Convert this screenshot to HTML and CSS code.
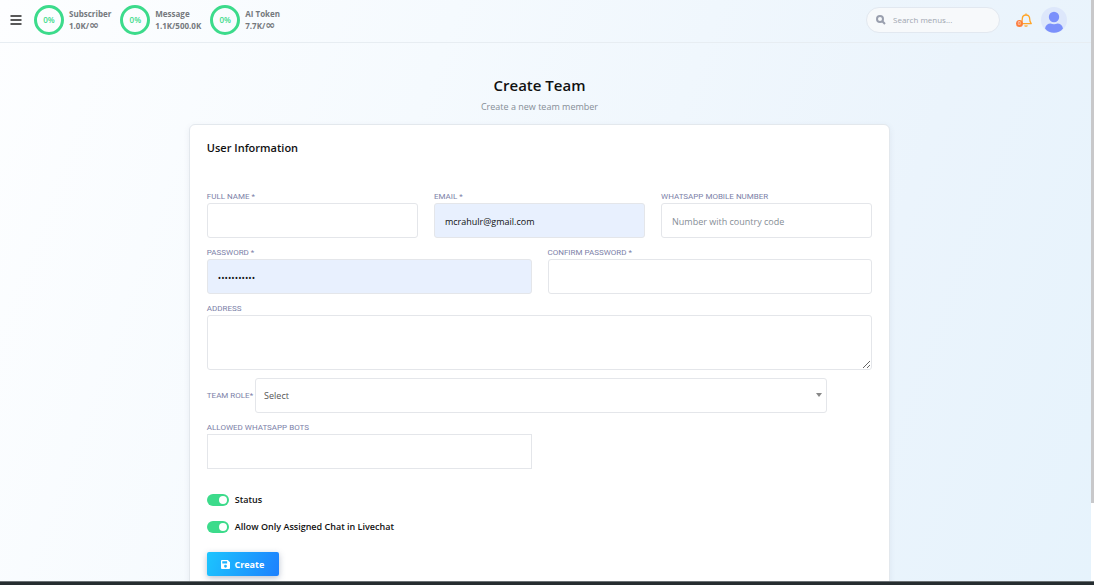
FILE: index.html
```html
<!DOCTYPE html>
<html lang="en">
<head>
    <meta charset="UTF-8">
    <meta name="viewport" content="width=device-width, initial-scale=1.0">
    <title>Create Team</title>
    <link rel="stylesheet" href="styles.css">
</head>
<body>
    <header class="topbar">
        <button class="menu-toggle" type="button" aria-label="Toggle menu">
            <svg viewBox="0 0 12 10" width="12" height="10">
                <path d="M0.5 1h11M0.5 5h11M0.5 9h11"></path>
            </svg>
        </button>

        <div class="usage">
            <div class="usage-item">
                <div class="ring">0%</div>
                <div class="usage-text">
                    <div>Subscriber</div>
                    <div>1.0K/<span class="infinity">∞</span></div>
                </div>
            </div>
            <div class="usage-item">
                <div class="ring">0%</div>
                <div class="usage-text">
                    <div>Message</div>
                    <div>1.1K/500.0K</div>
                </div>
            </div>
            <div class="usage-item">
                <div class="ring">0%</div>
                <div class="usage-text">
                    <div>AI Token</div>
                    <div>7.7K/<span class="infinity">∞</span></div>
                </div>
            </div>
        </div>

        <div class="search">
            <svg viewBox="0 0 10 10" width="10" height="10">
                <circle cx="4" cy="4" r="3"></circle>
                <path d="M6.3 6.3L9 9"></path>
            </svg>
            <input type="text" placeholder="Search menus..." aria-label="Search menus">
        </div>

        <button class="bell" type="button" aria-label="Notifications">
            <svg viewBox="0 0 12 14" width="12" height="14">
                <path d="M6 2V0.500M6 2c-2.700 0-3.700 1.800-3.700 4c0 2.400-.5 3.500-1.600 4.600h10.600c-1.100-1.100-1.600-2.200-1.600-4.600c0-2.200-1-4-3.700-4z"></path>
                <path d="M4.600 12.500c.4.900 2.400.9 2.800 0"></path>
            </svg>
            <span class="badge">0</span>
        </button>

        <button class="avatar" type="button" aria-label="Account">
            <svg viewBox="0 0 26 26" width="26" height="26">
                <circle cx="13" cy="13" r="13" fill="#dde7fb"></circle>
                <circle cx="13" cy="10" r="5.200" fill="#7b90fb"></circle>
                <path d="M4 21.500c.6-3.500 3-5 5.500-5c2.300 1 4.700 1 7 0c2.500 0 4.900 1.500 5.500 5c-4.500 5.800-13.500 5.800-18 0z" fill="#7b90fb"></path>
            </svg>
        </button>
    </header>

    <main class="content">
        <h1>Create Team</h1>
        <p class="subtitle">Create a new team member</p>

        <section class="card">
            <h2>User Information</h2>
            <form>
                <div class="row three">
                    <div class="field">
                        <label for="name">FULL NAME *</label>
                        <input type="text" id="name">
                    </div>
                    <div class="field">
                        <label for="email">EMAIL *</label>
                        <input type="email" id="email" class="filled" value="mcrahulr@gmail.com">
                    </div>
                    <div class="field">
                        <label for="mobile">WHATSAPP MOBILE NUMBER</label>
                        <input type="text" id="mobile" placeholder="Number with country code">
                    </div>
                </div>

                <div class="row two">
                    <div class="field">
                        <label for="password">PASSWORD *</label>
                        <input type="password" id="password" class="filled" value="12345678901">
                    </div>
                    <div class="field">
                        <label for="confirm">CONFIRM PASSWORD *</label>
                        <input type="password" id="confirm">
                    </div>
                </div>

                <div class="field">
                    <label for="address">ADDRESS</label>
                    <textarea id="address"></textarea>
                </div>

                <div class="role">
                    <label for="role">TEAM ROLE*</label>
                    <div class="select-wrap">
                        <select id="role">
                            <option>Select</option>
                        </select>
                    </div>
                </div>

                <div class="row two">
                    <div class="field">
                        <label for="bots">ALLOWED WHATSAPP BOTS</label>
                        <input type="text" id="bots" class="square">
                    </div>
                </div>

                <div class="switches">
                    <label class="switch">
                        <input type="checkbox" checked>
                        <span>Status</span>
                    </label>
                    <label class="switch">
                        <input type="checkbox" checked>
                        <span>Allow Only Assigned Chat in Livechat</span>
                    </label>
                </div>

                <button class="create" type="submit">
                    <svg viewBox="0 0 14 14" width="9" height="9">
                        <path fill-rule="evenodd" d="M1.500 0h9L14 3.500v9a1.500 1.500 0 0 1-1.500 1.500h-11A1.500 1.500 0 0 1 0 12.500v-11A1.500 1.500 0 0 1 1.500 0zM2 2v3.500h7.500V2zM7 7.500a2.200 2.200 0 1 0 0 4.400a2.200 2.200 0 1 0 0-4.400z"></path>
                    </svg>
                    Create
                </button>
            </form>
        </section>
    </main>

    <div class="scrollbar"><div class="thumb"></div></div>
    <div class="bottom-edge"></div>
</body>
</html>
```

FILE: styles.css
```css
:root {
    --green: #3cdb8b;
    --border: #e4e6ea;
    --label: #7c7fa8;
    --muted: #868e96;
    --filled: #e8f0fe;
}

* {
    box-sizing: border-box;
    margin: 0;
    padding: 0;
}

body {
    height: 100vh;
    overflow: hidden;
    font-family: 'Open Sans', 'Noto Sans', sans-serif;
    font-size: 9px;
    color: #111;
    background: linear-gradient(110deg, #fdfeff 0%, #f5fafe 35%, #ebf4fc 75%, #e6f3fc 100%);
}

button {
    border: none;
    background: none;
    cursor: pointer;
    font-family: inherit;
}

input, textarea, select {
    font-family: inherit;
    font-size: 9px;
    color: #111;
    outline: none;
}

/* top bar */
.topbar {
    display: flex;
    align-items: center;
    height: 43px;
    padding: 0 27px 3px 10px;
    border-bottom: 1px solid #e7edf2;
}

.menu-toggle {
    display: flex;
    margin-right: 12px;
}

.menu-toggle svg {
    stroke: #222;
    stroke-width: 1.4;
}

.usage {
    display: flex;
    gap: 9px;
}

.usage-item {
    display: flex;
    align-items: center;
    gap: 5px;
}

.ring {
    display: flex;
    align-items: center;
    justify-content: center;
    width: 30px;
    height: 30px;
    border: 3px solid var(--green);
    border-radius: 50%;
    color: var(--green);
    font-size: 8px;
    font-weight: 600;
}

.usage-text {
    font-size: 8px;
    line-height: 12px;
    font-weight: 700;
    color: #75797d;
}

.infinity {
    font-family: 'DejaVu Sans', sans-serif;
    font-size: 12px;
    line-height: 8px;
}

.search {
    display: flex;
    align-items: center;
    gap: 7px;
    width: 134px;
    height: 26px;
    margin-left: auto;
    padding: 0 9px;
    border: 1px solid #e2e8f0;
    border-radius: 13px;
    background: #f7f9fb;
}

.search svg {
    flex: none;
    fill: none;
    stroke: #9a9fae;
    stroke-width: 2;
}

.search input {
    flex: 1;
    min-width: 0;
    border: none;
    background: transparent;
    font-size: 8px;
}

.search input::placeholder {
    color: #a0a6b0;
}

.bell {
    position: relative;
    display: flex;
    margin: 0 9px 0 20px;
}

.bell svg {
    fill: none;
    stroke: #ffa426;
    stroke-width: 1.3;
    stroke-linejoin: round;
}

.badge {
    position: absolute;
    left: -4px;
    bottom: 0;
    width: 7px;
    height: 7px;
    border-radius: 50%;
    background: #fd7e3a;
    color: #fff;
    font-size: 5px;
    line-height: 7px;
    text-align: center;
}

.avatar {
    display: flex;
}

/* page */
.content {
    padding: 31px 15px 0 0;
}

h1 {
    font-size: 15px;
    line-height: 22px;
    font-weight: 600;
    text-align: center;
}

.subtitle {
    margin-bottom: 6px;
    line-height: 22px;
    color: var(--muted);
    text-align: center;
}

.card {
    width: 65%;
    margin: 0 auto;
    padding: 13px 17px 40px;
    border: 1px solid #e3e8ed;
    border-radius: 6px;
    background: #fff;
    box-shadow: 0 2px 6px rgba(60, 80, 120, 0.08);
}

h2 {
    margin-bottom: 32px;
    font-size: 11px;
    line-height: 20px;
    font-weight: 600;
}

form {
    display: flex;
    flex-direction: column;
    gap: 8px;
}

.row {
    display: grid;
    gap: 16px;
}

.three {
    grid-template-columns: repeat(3, 1fr);
}

.two {
    grid-template-columns: repeat(2, 1fr);
}

.field {
    display: flex;
    flex-direction: column;
}

.field label, .role label {
    font-family: 'Roboto', sans-serif;
    font-size: 8px;
    line-height: 13px;
    color: var(--label);
}

.field input, .field textarea, select {
    width: 100%;
    height: 35px;
    padding: 1px 10px 0;
    border: 1px solid var(--border);
    border-radius: 3px;
    background: #fff;
}

.field textarea {
    height: 55px;
    resize: vertical;
}

.field .filled {
    background: var(--filled);
}

.field .square {
    border-radius: 0;
}

.field input::placeholder {
    color: var(--muted);
}

.role {
    display: flex;
    align-items: center;
    gap: 2px;
}

.select-wrap {
    position: relative;
    width: 86%;
}

.select-wrap select {
    display: block;
    padding: 0 8px;
    appearance: none;
    color: #555;
}

.select-wrap::after {
    content: '';
    position: absolute;
    top: 15px;
    right: 5px;
    border: 3px solid transparent;
    border-top: 4px solid #888;
    border-bottom: 0;
}

.switches {
    display: flex;
    flex-direction: column;
    gap: 11px;
    margin: 15px 0 9px;
}

.switch {
    display: flex;
    align-items: center;
    gap: 6px;
    line-height: 16px;
    font-weight: 600;
}

.switch input {
    display: flex;
    justify-content: flex-end;
    width: 22px;
    height: 12px;
    padding: 2px;
    border-radius: 6px;
    appearance: none;
    background: var(--green);
}

.switch input::before {
    content: '';
    width: 8px;
    height: 8px;
    border-radius: 50%;
    background: #fff;
}

.create {
    display: flex;
    align-items: center;
    justify-content: center;
    gap: 4px;
    align-self: flex-start;
    width: 72px;
    height: 24px;
    border-radius: 2px;
    background: linear-gradient(110deg, #1cc5fe, #1d80fe);
    box-shadow: 0 2px 6px rgba(60, 80, 120, 0.35);
    color: #fff;
    font-size: 9px;
    font-weight: 700;
}

.create svg {
    fill: #fff;
}

/* window edges */
.scrollbar {
    position: fixed;
    top: 0;
    right: 0;
    bottom: 0;
    width: 3px;
    background: #fff;
}

.thumb {
    height: 86%;
    background: #c8c8ca;
}

.bottom-edge {
    position: fixed;
    left: 0;
    right: 0;
    bottom: 0;
    height: 4px;
    border-top: 1px solid #6b7174;
    background: #262d30;
}
```
